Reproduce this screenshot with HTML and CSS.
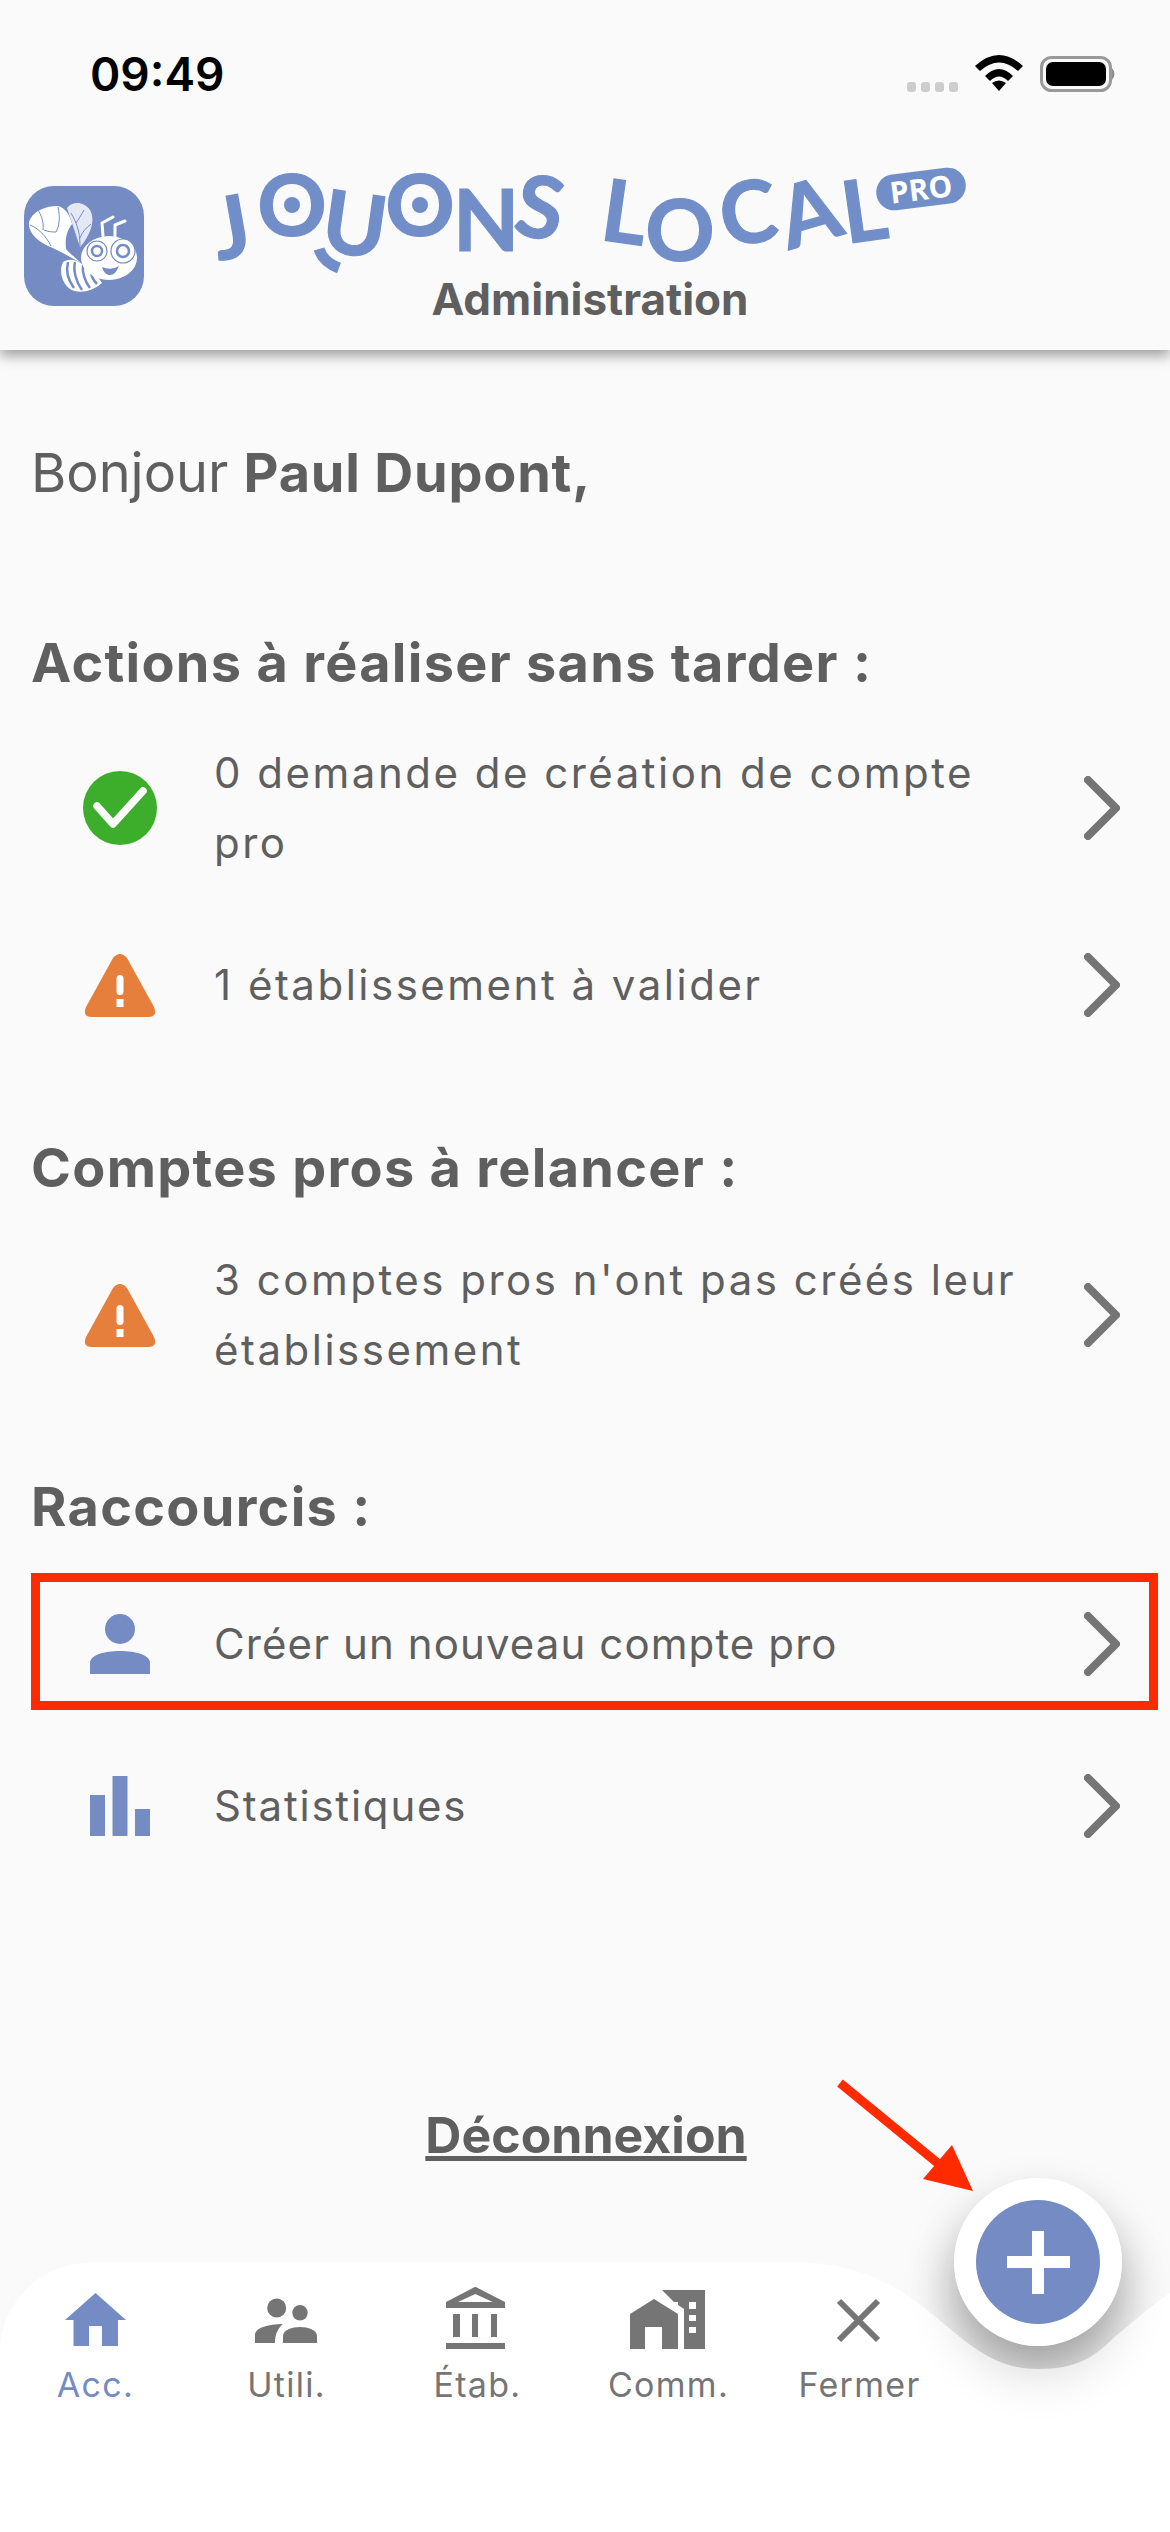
FILE: index.html
```html
<!DOCTYPE html>
<html lang="fr">

<head>
    <meta charset="UTF-8">
    <meta name="viewport" content="width=device-width, initial-scale=1.0">
    <title>Jouons Local Pro - Administration</title>
    <link rel="stylesheet" href="styles.css">
</head>

<body>
    <div class="page">
        <header class="header">
            <div class="status">
                <span class="time">09:49</span>
                <svg class="status-icons" width="212" height="40" viewBox="905 54 212 40">
                    <rect class="dot" x="907" y="82" width="9" height="10" rx="3" />
                    <rect class="dot" x="921" y="82" width="9" height="10" rx="3" />
                    <rect class="dot" x="935" y="82" width="9" height="10" rx="3" />
                    <rect class="dot" x="949" y="82" width="9" height="10" rx="3" />
                    <path d="M975 66 Q999 44 1023 66 L1018 71 Q999 54 980 71 Z" />
                    <path d="M985 76 Q999 62 1013 76 L1008 81 Q999 72 990 81 Z" />
                    <path d="M992 83 Q999 78 1006 83 L999 91 Z" />
                    <rect class="batt" x="1041.5" y="57.5" width="69" height="33" rx="10" />
                    <rect x="1046" y="62" width="60" height="24" rx="7" />
                    <path class="nub" d="M1112 68 Q1117 74 1112 80 Z" />
                </svg>
            </div>
            <div class="brand">
                <svg class="app-icon" width="120" height="120" viewBox="0 0 120 120">
                    <rect class="bee-bg" width="120" height="120" rx="30" />
                    <path class="bee-wing-back" d="M43 22 C48 15 60 15 66 24 C72 34 66 50 56 61 Z" />
                    <path class="bee-line" d="M47 27 C52 36 56 44 56 60 M67 38 C62 42 58 46 56 52 M60 24 C58 28 54 34 52 37" />
                    <path class="bee-wing" d="M5 36 C8 26 20 20 34 20 C42 22 46 30 48 38 C42 46 41 54 42 63 C46 68 52 72 57 77 C44 70 34 64 24 60 C12 54 4 46 5 36 Z" />
                    <path class="bee-line" d="M13 23 C18 29 20 38 19 44 M34 21 C36 30 36 38 32 46 M6 39 C14 42 22 50 27 60 M20 44 C25 46 29 46 32 46" />
                    <path class="bee-body" d="M39 76 C46 72 52 74 58 78 C68 84 74 90 78 97 C68 106 54 108 46 103 C37 96 35 84 39 76 Z" />
                    <path class="bee-stripe" d="M44 76 C42 84 44 94 50 102 M51 76 C49 84 52 96 58 104 M59 79 C58 86 61 96 66 102 M67 85 C67 90 70 95 73 98" />
                    <ellipse class="bee-head" cx="85" cy="72" rx="28" ry="22" />
                    <circle class="bee-eye" cx="73" cy="65" r="10" />
                    <circle class="bee-pupil" cx="73" cy="65" r="5" />
                    <circle class="bee-eye" cx="99" cy="65" r="12" />
                    <circle class="bee-pupil" cx="99" cy="65" r="6" />
                    <path class="bee-smile" d="M78 81 Q87 85 95 80 Q91 90 85 89 Q80 88 78 81 Z" />
                    <path class="bee-antenna" d="M79 50 L78 37 L89 31 M91 51 L91 39 L101 35" />
                </svg>
                <div class="brand-text">
                    <svg class="logo" width="780" height="159" viewBox="200 118 780 159">
                        <text transform="translate(231 227) rotate(-10)" y="31">J</text>
                        <text transform="translate(292 205)" y="31">O</text>
                        <circle cx="292" cy="205" r="8" />
                        <text transform="translate(355 224) rotate(8)" y="31">U</text>
                        <path class="logo-arc" d="M319 249 Q323 262 339 268" />
                        <text transform="translate(420 205)" y="31">O</text>
                        <circle cx="420" cy="205" r="8" />
                        <text transform="translate(486 220)" y="31">N</text>
                        <text transform="translate(540 207) rotate(10)" y="31">S</text>
                        <text transform="translate(625 212) rotate(8)" y="31">L</text>
                        <text transform="translate(680 230)" y="31">O</text>
                        <text transform="translate(748 212) rotate(-8)" y="31">C</text>
                        <text transform="translate(809 212) rotate(-16)" y="31">A</text>
                        <text transform="translate(864 210) rotate(-8)" y="31">L</text>
                        <rect x="876" y="171" width="90" height="36" rx="18" transform="rotate(-7 921 189)" />
                        <text class="logo-pro" transform="translate(921 189) rotate(-7)" y="11">PRO</text>
                    </svg>
                    <div class="subtitle">Administration</div>
                </div>
            </div>
        </header>

        <main class="main">
            <p class="greeting">Bonjour <strong>Paul Dupont,</strong></p>

            <section class="section section-actions">
                <h2>Actions à réaliser sans tarder :</h2>
                <div class="row">
                    <div class="row-icon">
                        <svg width="74" height="74" viewBox="0 0 74 74">
                            <circle class="ok" cx="37" cy="37" r="37" />
                            <path class="ok-mark" d="M14 35 L30 53 L60 20" />
                        </svg>
                    </div>
                    <div class="row-text row-text-wide">0 demande de création de compte pro</div>
                    <svg class="chevron" width="36" height="64" viewBox="0 0 36 64"><path d="M4 4 L32 32 L4 60" /></svg>
                </div>
                <div class="row">
                    <div class="row-icon">
                        <svg width="72" height="64" viewBox="0 0 72 64">
                            <path class="warn" d="M29 5 Q36 -3 43 5 L70 54 Q74 64 64 64 L8 64 Q-2 64 2 54 Z" />
                            <rect class="warn-mark" x="32.500" y="22" width="7" height="20" rx="3.500" />
                            <rect class="warn-mark" x="32.500" y="46" width="7" height="8" />
                        </svg>
                    </div>
                    <div class="row-text row-text-wide">1 établissement à valider</div>
                    <svg class="chevron" width="36" height="64" viewBox="0 0 36 64"><path d="M4 4 L32 32 L4 60" /></svg>
                </div>
            </section>

            <section class="section section-relance">
                <h2>Comptes pros à relancer :</h2>
                <div class="row">
                    <div class="row-icon">
                        <svg width="72" height="64" viewBox="0 0 72 64">
                            <path class="warn" d="M29 5 Q36 -3 43 5 L70 54 Q74 64 64 64 L8 64 Q-2 64 2 54 Z" />
                            <rect class="warn-mark" x="32.500" y="22" width="7" height="20" rx="3.500" />
                            <rect class="warn-mark" x="32.500" y="46" width="7" height="8" />
                        </svg>
                    </div>
                    <div class="row-text row-text-wide">3 comptes pros n'ont pas créés leur établissement</div>
                    <svg class="chevron" width="36" height="64" viewBox="0 0 36 64"><path d="M4 4 L32 32 L4 60" /></svg>
                </div>
            </section>

            <section class="section section-shortcuts">
                <h2>Raccourcis :</h2>
                <div class="row row-short row-marked">
                    <div class="row-icon">
                        <svg class="blue" width="60" height="60" viewBox="0 0 60 60">
                            <ellipse cx="30" cy="15" rx="15" ry="15" />
                            <path d="M0 60 V49 C0 41 14 37 30 37 C46 37 60 41 60 49 V60 Z" />
                        </svg>
                    </div>
                    <div class="row-text row-text-tight">Créer un nouveau compte pro</div>
                    <svg class="chevron" width="36" height="64" viewBox="0 0 36 64"><path d="M4 4 L32 32 L4 60" /></svg>
                </div>
                <div class="row row-short row-stats">
                    <div class="row-icon">
                        <svg class="blue" width="60" height="60" viewBox="0 0 60 60">
                            <rect x="0" y="19" width="15" height="41" />
                            <rect x="22.500" y="0" width="15" height="60" />
                            <rect x="45" y="33" width="15" height="27" />
                        </svg>
                    </div>
                    <div class="row-text">Statistiques</div>
                    <svg class="chevron" width="36" height="64" viewBox="0 0 36 64"><path d="M4 4 L32 32 L4 60" /></svg>
                </div>
            </section>

            <a class="logout" href="#">Déconnexion</a>
        </main>

        <nav class="tabbar">
            <div class="fab-shadow"></div>
            <svg class="tabbar-bg" width="1170" height="270" viewBox="0 0 1170 270">
                <path d="M0 270 V91 C0 40 40 0 97 0 H790 C850 0 890 18 927 48 C965 78 990 107 1038 107 C1086 107 1100 88 1117 73 C1135 58 1150 45 1170 31 V270 Z" />
            </svg>
            <div class="tabs">
                <div class="tab tab-active">
                    <svg width="191" height="72" viewBox="0 2285 191 72">
                        <path d="M95.500 2293 L126 2320 H118 V2346 H102 V2326 H89 V2346 H73.500 V2320 H65 Z" />
                    </svg>
                    <span>Acc.</span>
                </div>
                <div class="tab">
                    <svg width="191" height="72" viewBox="191 2285 191 72">
                        <circle cx="276.700" cy="2308" r="9.500" />
                        <circle cx="300" cy="2312.700" r="7.700" />
                        <path d="M283 2343 V2336 C283 2330 292 2327 300 2327 C308 2327 317 2330 317 2336 V2343 Z" />
                        <path d="M255 2343 V2335 C255 2328 268 2324 283 2324 C278 2328 275 2334 275 2343 Z" />
                    </svg>
                    <span>Utili.</span>
                </div>
                <div class="tab">
                    <svg width="191" height="72" viewBox="382 2285 191 72">
                        <path fill-rule="evenodd" d="M475.300 2286.700 L505 2302 V2308 H446 V2302 Z M475.300 2294 L458 2302 H492.700 Z" />
                        <rect x="453" y="2314" width="7" height="23" />
                        <rect x="472" y="2314" width="6" height="23" />
                        <rect x="491" y="2314" width="6" height="23" />
                        <rect x="446" y="2343" width="59" height="6" />
                    </svg>
                    <span>Étab.</span>
                </div>
                <div class="tab">
                    <svg width="191" height="72" viewBox="573 2285 191 72">
                        <path fill-rule="evenodd" d="M662 2290 H705 V2349 H684 V2309 L678 2305 V2302 H674 Z M689 2302 V2309 H696 V2302 Z M689 2315 V2321 H696 V2315 Z M689 2327 V2333 H696 V2327 Z" />
                        <path fill-rule="evenodd" d="M654 2299 L678 2314 V2349 H662 V2327 H645 V2349 H630 V2314 Z" />
                    </svg>
                    <span>Comm.</span>
                </div>
                <div class="tab">
                    <svg width="191" height="72" viewBox="764 2285 191 72">
                        <path class="close" d="M839 2301 L878 2340 M878 2301 L839 2340" />
                    </svg>
                    <span>Fermer</span>
                </div>
            </div>
            <button class="fab" aria-label="Ajouter">
                <svg width="124" height="124" viewBox="0 0 124 124">
                    <circle class="fab-disc" cx="62" cy="62" r="62" />
                    <path class="fab-plus" d="M56 31 H68 V56 H94 V68 H68 V94 H56 V68 H31 V56 H56 Z" />
                </svg>
            </button>
        </nav>

        <svg class="arrow" width="150" height="120" viewBox="830 2078 150 120">
            <path class="arrow-line" d="M840 2083 L940 2165" />
            <path class="arrow-head" d="M952 2145 L973 2191 L923 2179 Z" />
        </svg>
    </div>
</body>

</html>
```

FILE: styles.css
```css
* {
    padding: 0;
    margin: 0;
    box-sizing: border-box;
}

body {
    background: #fafafa;
    font-family: Inter, "Liberation Sans", sans-serif;
    color: #5f5f5f;
}

.page {
    position: relative;
    display: flex;
    flex-direction: column;
    width: 1170px;
    height: 2532px;
    overflow: hidden;
}

/* header */
.header {
    position: relative;
    z-index: 2;
    height: 350px;
    background: #fafafa;
    box-shadow: 0 6px 12px rgba(0, 0, 0, .36);
}

.status {
    display: flex;
    align-items: center;
    justify-content: space-between;
    height: 118px;
    padding: 30px 53px 0 90px;
}

.time {
    font-size: 46px;
    font-weight: 600;
    color: #000;
}

.status-icons .dot {
    fill: #cdcdcd;
}

.status-icons .batt {
    fill: none;
    stroke: #999;
    stroke-width: 3px;
}

.status-icons .nub {
    fill: #8f8f8f;
}

.brand {
    display: flex;
    align-items: flex-start;
    padding-left: 24px;
}

.app-icon {
    margin: 68px 56px 0 0;
}

.bee-bg {
    fill: #748bc3;
}

.bee-wing,
.bee-body,
.bee-head,
.bee-eye {
    fill: #fff;
}

.bee-wing-back {
    fill: #e4e8f4;
}

.bee-line {
    fill: none;
    stroke: #748bc3;
    stroke-width: 1px;
}

.bee-stripe {
    fill: none;
    stroke: #748bc3;
    stroke-width: 2.5px;
}

.bee-eye {
    stroke: #748bc3;
    stroke-width: 1.2px;
}

.bee-pupil {
    fill: #fff;
    stroke: #748bc3;
    stroke-width: 2.5px;
}

.bee-smile {
    fill: #748bc3;
}

.bee-antenna {
    fill: none;
    stroke: #fff;
    stroke-width: 3px;
    stroke-linecap: round;
    stroke-linejoin: round;
}

.brand-text {
    width: 780px;
    text-align: center;
}

.logo {
    display: block;
    overflow: visible;
    fill: #728ec9;
}

.logo text {
    font-family: Lato, "Open Sans", sans-serif;
    font-size: 86px;
    font-weight: 700;
    text-anchor: middle;
    stroke: #728ec9;
    stroke-width: 1.2px;
}

.logo .logo-pro {
    font-family: "Open Sans", sans-serif;
    font-size: 30px;
    font-weight: 700;
    fill: #fff;
    stroke: none;
}

.logo-arc {
    fill: none;
    stroke: #728ec9;
    stroke-width: 11px;
}

.subtitle {
    font-size: 44px;
    font-weight: 700;
    line-height: 44px;
}

/* contenu */
.main {
    flex: 1;
    display: flex;
    flex-direction: column;
    padding: 0 12px 0 31px;
}

.greeting {
    margin-top: 93px;
    font-size: 54px;
    line-height: 60px;
}

.greeting strong {
    font-weight: 700;
    letter-spacing: .8px;
}

h2 {
    font-size: 54px;
    font-weight: 700;
    line-height: 56px;
    letter-spacing: 1.3px;
}

.section-actions {
    margin-top: 132px;
}

.section-actions h2 {
    margin-bottom: 11px;
}

.section-relance {
    margin-top: 84px;
}

.section-relance h2 {
    margin-bottom: 13px;
}

.section-shortcuts {
    margin-top: 58px;
}

.section-shortcuts h2 {
    margin-bottom: 38px;
}

.row {
    display: flex;
    align-items: center;
    padding: 36px 38px 36px 0;
}

.row-short {
    padding-top: 36px;
    padding-bottom: 31px;
}

.row-marked {
    outline: 9px solid #ff2a00;
    outline-offset: -9px;
}

.row-stats {
    margin-top: 25px;
}

.row-icon {
    display: flex;
    justify-content: center;
    width: 178px;
    margin-right: 5px;
}

.row-text {
    flex: 1;
    padding-right: 50px;
    font-size: 42px;
    line-height: 70px;
    letter-spacing: 1.8px;
}

.row-text-wide {
    letter-spacing: 2.5px;
}

.row-text-tight {
    letter-spacing: 1.1px;
}

.chevron {
    fill: none;
    stroke: #757575;
    stroke-width: 8px;
    stroke-linecap: round;
    stroke-linejoin: round;
}

.ok {
    fill: #3dae2b;
}

.ok-mark {
    fill: none;
    stroke: #fff;
    stroke-width: 7.5px;
    stroke-linecap: round;
    stroke-linejoin: round;
}

.warn {
    fill: #e67e3c;
}

.warn-mark {
    fill: #fff;
}

.blue {
    fill: #748bc3;
}

.logout {
    margin: auto 17px 97px 0;
    font-size: 50px;
    font-weight: 700;
    line-height: 60px;
    text-align: center;
    color: #5f5f5f;
}

/* barre du bas */
.tabbar {
    position: relative;
    height: 270px;
}

.tabbar-bg {
    position: absolute;
    left: 0;
    top: 0;
    fill: #fff;
}

.fab-shadow {
    position: absolute;
    left: 954px;
    top: -84px;
    width: 168px;
    height: 168px;
    border-radius: 50%;
    box-shadow: 0 28px 50px rgba(0, 0, 0, .26);
}

.tabs {
    position: relative;
    display: flex;
    width: 955px;
    padding-top: 23px;
}

.tab {
    display: flex;
    flex-direction: column;
    align-items: center;
    width: 191px;
    font-size: 34px;
    line-height: 56px;
    letter-spacing: 1.3px;
    color: #757575;
    fill: #757575;
}

.tab svg {
    display: block;
}

.tab-active {
    color: #748bc3;
    fill: #748bc3;
}

.close {
    fill: none;
    stroke: #757575;
    stroke-width: 6px;
}

.fab {
    position: absolute;
    left: 954px;
    top: -84px;
    display: flex;
    align-items: center;
    justify-content: center;
    width: 168px;
    height: 168px;
    border: 0;
    border-radius: 50%;
    background: #fff;
    box-shadow: 0 30px 50px rgba(0, 0, 0, .14);
}

.fab-disc {
    fill: #748bc3;
}

.fab-plus {
    fill: #fff;
}

/* annotation rouge */
.arrow {
    position: absolute;
    left: 830px;
    top: 2078px;
}

.arrow-line {
    fill: none;
    stroke: #ff2a00;
    stroke-width: 9px;
}

.arrow-head {
    fill: #ff2a00;
}
```
